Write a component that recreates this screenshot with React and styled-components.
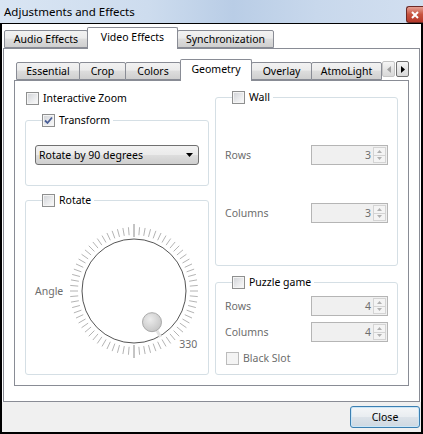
import styled, { createGlobalStyle } from "styled-components";

const GlobalStyle = createGlobalStyle`
  html, body {
    margin: 0;
    padding: 0;
    background: #000;
  }
  body {
    font-family: "Noto Sans", "DejaVu Sans", sans-serif;
    font-size: 10.5px;
    color: #000;
  }
`;

const Window = styled.div`
  width: 423px;
  height: 434px;
  display: flex;
  flex-direction: column;
  overflow: hidden;
`;

const TitleBar = styled.div`
  height: 23px;
  flex: none;
  display: flex;
  align-items: center;
  justify-content: space-between;
  padding-left: 4px;
  background: linear-gradient(90deg, #d9e5f3 0%, #cddcee 35%, #b9cde6 55%, #c8d8ec 75%, #d2dff0 100%);
  font-size: 11.5px;
  color: #000;
`;

const CloseX = styled.div`
  align-self: flex-start;
  margin-top: 6px;
  width: 16px;
  height: 15px;
  border: 1px solid #6d2a26;
  border-right: none;
  border-radius: 3px 0 0 3px;
  background: linear-gradient(#e6a094, #c7533f 50%, #b5382a);
  display: flex;
  align-items: center;
  justify-content: center;
`;

const Body = styled.div`
  flex: 1;
  display: flex;
  flex-direction: column;
  border: 2px solid #000;
  border-top: 1px solid #000;
  background: #fff;
`;

const TabBar = styled.div`
  display: flex;
  align-items: flex-end;
  padding-left: ${(p) => p.$indent}px;
  height: ${(p) => p.$height}px;
  flex: none;
  position: relative;
  z-index: 1;
`;

const Tab = styled.div`
  box-sizing: border-box;
  width: ${(p) => p.$w}px;
  height: ${(p) => (p.$active ? p.$h + 4 : p.$h)}px;
  margin-bottom: ${(p) => (p.$active ? -1 : 0)}px;
  margin-left: -1px;
  border: 1px solid #898c95;
  border-bottom: ${(p) => (p.$active ? "none" : "1px solid #898c95")};
  border-radius: 2px 2px 0 0;
  background: ${(p) =>
    p.$active
      ? "#fff"
      : "linear-gradient(#f2f2f2 0%, #ebebeb 45%, #dddddd 50%, #cfcfcf 100%)"};
  display: flex;
  align-items: center;
  justify-content: center;
  padding-bottom: ${(p) => (p.$active ? 3 : 0)}px;
  white-space: nowrap;
`;

const Page = styled.div`
  box-sizing: border-box;
  border: 1px solid #898c95;
  background: #fff;
`;

const OuterPage = styled(Page)`
  margin: 0 1px;
  height: 354px;
  padding: 10px 10px 0 10px;
`;

const InnerPage = styled(Page)`
  height: 306px;
  display: grid;
  grid-template-columns: 184px 183px;
  column-gap: 6px;
  padding: 0 0 0 10px;
`;

const ScrollButtons = styled.div`
  margin-left: auto;
  align-self: flex-start;
  margin-top: 2px;
  display: flex;
  gap: 1px;
`;

const ScrollButton = styled.div`
  box-sizing: border-box;
  width: 13px;
  height: 16px;
  border: 1px solid ${(p) => (p.$disabled ? "#c5c5c5" : "#707070")};
  border-radius: 2px;
  background: linear-gradient(#f6f6f6, #e5e5e5 50%, #d9d9d9);
  display: flex;
  align-items: center;
  justify-content: center;
`;

const Column = styled.div`
  display: flex;
  flex-direction: column;
`;

const CheckRow = styled.label`
  display: flex;
  align-items: center;
  gap: 4px;
  height: 14px;
  color: ${(p) => (p.$disabled ? "#6d6d6d" : "#000")};
  margin: ${(p) => p.$margin || "0"};
`;

const Box = styled.span`
  box-sizing: border-box;
  width: 13px;
  height: 13px;
  flex: none;
  border: 1px solid ${(p) => (p.$disabled ? "#bcbcbc" : "#8e8f8f")};
  background: ${(p) =>
    p.$disabled
      ? "#f4f4f4"
      : "linear-gradient(135deg, #cfd1d5 0%, #e9eaec 55%, #fbfbfb 100%)"};
  box-shadow: inset 0 0 0 1px #f4f4f4;
  display: flex;
  align-items: center;
  justify-content: center;
`;

const Group = styled.fieldset`
  box-sizing: border-box;
  margin: ${(p) => p.$top}px 0 0 0;
  border: 1px solid #d5dfe5;
  border-radius: 3px;
  padding: ${(p) => p.$pad};
  height: ${(p) => p.$h}px;
  min-width: 0;
`;

const Legend = styled.legend`
  padding: 0 3px 0 0;
  margin-left: 7px;
  line-height: 12px;
`;

const Combo = styled.div`
  box-sizing: border-box;
  height: 20px;
  border: 1px solid #707070;
  border-radius: 3px;
  background: linear-gradient(#f2f2f2 0%, #ebebeb 48%, #dddddd 52%, #cfcfcf 100%);
  display: flex;
  align-items: center;
  justify-content: space-between;
  padding: 0 5px 0 3px;
`;

const FieldRow = styled.div`
  display: flex;
  align-items: center;
  justify-content: space-between;
  height: 20px;
  color: #6d6d6d;
  margin-top: ${(p) => p.$top}px;
`;

const Spin = styled.div`
  box-sizing: border-box;
  width: 77px;
  height: 20px;
  border: 1px solid #b5b5b5;
  background: #f0f0f0;
  display: flex;
  align-items: center;
  justify-content: flex-end;
  color: #6d6d6d;
`;

const SpinArrows = styled.div`
  width: 13px;
  height: 16px;
  margin: 0 1px 0 2px;
  display: flex;
  flex-direction: column;
  border: 1px solid #d4d4d4;
  box-sizing: border-box;
  background: #f4f4f4;
  & > span {
    flex: 1;
    display: flex;
    align-items: center;
    justify-content: center;
  }
  & > span + span {
    border-top: 1px solid #d4d4d4;
  }
`;

const DialRow = styled.div`
  display: flex;
  align-items: center;
  gap: 1px;
  margin-top: 14px;
  color: #6d6d6d;
`;

const DialWrap = styled.div`
  position: relative;
  width: 140px;
  height: 140px;
`;

const DialValue = styled.span`
  position: absolute;
  left: 115px;
  top: 116px;
  color: #6d6d6d;
`;

const Footer = styled.div`
  flex: 1;
  background: #f0f0f0;
  display: flex;
  justify-content: flex-end;
  align-items: flex-start;
  padding: 4px 1px 0 0;
`;

const Button = styled.button`
  box-sizing: border-box;
  width: 70px;
  height: 22px;
  border: 1px solid #3c7fb1;
  border-radius: 3px;
  background: linear-gradient(#f4f6f8 0%, #e9edf1 48%, #dbe2e9 52%, #cfd8e1 100%);
  box-shadow: inset 0 0 0 1px #c9e6f8;
  font: inherit;
  color: #000;
  padding: 0;
`;

function Check({ checked }) {
  if (!checked) return null;
  return (
    <svg width="9" height="9" viewBox="0 0 9 9">
      <path d="M1 4.5 L3.5 7 L8 1.5" fill="none" stroke="#4a5f97" strokeWidth="1.8" />
    </svg>
  );
}

function CheckBox({ label, checked, disabled, margin }) {
  return (
    <CheckRow $disabled={disabled} $margin={margin}>
      <Box $disabled={disabled}>
        <Check checked={checked} />
      </Box>
      {label}
    </CheckRow>
  );
}

function Triangle({ dir, color }) {
  const d = {
    down: "M0 0 H7 L3.5 4 Z",
    left: "M4 0 V7 L0 3.5 Z",
    right: "M0 0 V7 L4 3.5 Z",
    up: "M0 3 H5 L2.5 0 Z",
    dn: "M0 0 H5 L2.5 3 Z",
  }[dir];
  const size = {
    down: [7, 4],
    left: [4, 7],
    right: [4, 7],
    up: [5, 3],
    dn: [5, 3],
  }[dir];
  return (
    <svg width={size[0]} height={size[1]} viewBox={`0 0 ${size[0]} ${size[1]}`}>
      <path d={d} fill={color} />
    </svg>
  );
}

function SpinBox({ value }) {
  return (
    <Spin>
      {value}
      <SpinArrows>
        <span>
          <Triangle dir="up" color="#b0b0b0" />
        </span>
        <span>
          <Triangle dir="dn" color="#b0b0b0" />
        </span>
      </SpinArrows>
    </Spin>
  );
}

function Dial({ value }) {
  const cx = 70;
  const cy = 70;
  const ticks = [];
  for (let i = 0; i < 72; i++) {
    const a = (i * 5 * Math.PI) / 180;
    const big = i % 36 === 0;
    const r1 = big ? 54 : 56;
    const r2 = big ? 67 : 64;
    ticks.push(
      <line
        key={i}
        x1={cx + r1 * Math.sin(a)}
        y1={cy - r1 * Math.cos(a)}
        x2={cx + r2 * Math.sin(a)}
        y2={cy - r2 * Math.cos(a)}
        stroke={big ? "#8a8a8a" : "#b4b4b4"}
        strokeWidth="1"
      />
    );
  }
  // 0 sits at the bottom, values run clockwise
  const ang = ((value + 180) % 360) * (Math.PI / 180);
  const hx = cx + 36 * Math.sin(ang);
  const hy = cy - 36 * Math.cos(ang);
  return (
    <DialWrap>
      <svg width="140" height="140" viewBox="0 0 140 140">
        <defs>
          <radialGradient id="knob" cx="40%" cy="35%" r="70%">
            <stop offset="0%" stopColor="#ececec" />
            <stop offset="100%" stopColor="#c4c4c4" />
          </radialGradient>
        </defs>
        {ticks}
        <circle cx={cx} cy={cy} r="52" fill="#fff" stroke="#555" strokeWidth="1" />
        <line
          x1={cx + 46 * Math.sin(ang)}
          y1={cy - 46 * Math.cos(ang)}
          x2={cx + 53 * Math.sin(ang)}
          y2={cy - 53 * Math.cos(ang)}
          stroke="#e2e2e2"
          strokeWidth="3"
        />
        <circle cx={hx} cy={hy} r="9.5" fill="url(#knob)" stroke="#a9a9a9" strokeWidth="1" />
      </svg>
      <DialValue>{value}</DialValue>
    </DialWrap>
  );
}

export default function App() {
  return (
    <>
      <GlobalStyle />
      <Window>
        <TitleBar>
          <span>Adjustments and Effects</span>
          <CloseX>
            <svg width="8" height="8" viewBox="0 0 8 8">
              <path d="M1 1 L7 7 M7 1 L1 7" stroke="#fff" strokeWidth="2" />
            </svg>
          </CloseX>
        </TitleBar>
        <Body>
          <TabBar $indent={3} $height={24}>
            <Tab $w={84} $h={18}>Audio Effects</Tab>
            <Tab $w={91} $h={18} $active>Video Effects</Tab>
            <Tab $w={97} $h={18}>Synchronization</Tab>
          </TabBar>
          <OuterPage>
            <TabBar $indent={3} $height={21}>
              <Tab $w={64} $h={18}>Essential</Tab>
              <Tab $w={47} $h={18}>Crop</Tab>
              <Tab $w={56} $h={18}>Colors</Tab>
              <Tab $w={72} $h={18} $active>Geometry</Tab>
              <Tab $w={61} $h={18}>Overlay</Tab>
              <Tab $w={71} $h={18}>AtmoLight</Tab>
              <ScrollButtons>
                <ScrollButton $disabled>
                  <Triangle dir="left" color="#a0a0a0" />
                </ScrollButton>
                <ScrollButton>
                  <Triangle dir="right" color="#000" />
                </ScrollButton>
              </ScrollButtons>
            </TabBar>
            <InnerPage>
              <Column>
                <CheckBox label="Interactive Zoom" margin="10px 0 0 1px" />
                <Group $h={73} $top={8} $pad="18px 9px 0 9px">
                  <Legend>
                    <CheckBox label="Transform" checked />
                  </Legend>
                  <Combo>
                    <span>Rotate by 90 degrees</span>
                    <Triangle dir="down" color="#000" />
                  </Combo>
                </Group>
                <Group $h={182} $top={7} $pad="0 0 0 9px">
                  <Legend>
                    <CheckBox label="Rotate" />
                  </Legend>
                  <DialRow>
                    <span>Angle</span>
                    <Dial value={330} />
                  </DialRow>
                </Group>
              </Column>
              <Column>
                <Group $h={176} $top={9} $pad="0 9px 0 9px">
                  <Legend>
                    <CheckBox label="Wall" />
                  </Legend>
                  <FieldRow $top={41}>
                    <span>Rows</span>
                    <SpinBox value={3} />
                  </FieldRow>
                  <FieldRow $top={38}>
                    <span>Columns</span>
                    <SpinBox value={3} />
                  </FieldRow>
                </Group>
                <Group $h={100} $top={9} $pad="0 9px 0 9px">
                  <Legend>
                    <CheckBox label="Puzzle game" />
                  </Legend>
                  <FieldRow $top={7}>
                    <span>Rows</span>
                    <SpinBox value={4} />
                  </FieldRow>
                  <FieldRow $top={6}>
                    <span>Columns</span>
                    <SpinBox value={4} />
                  </FieldRow>
                  <CheckBox label="Black Slot" disabled margin="9px 0 0 1px" />
                </Group>
              </Column>
            </InnerPage>
          </OuterPage>
          <Footer>
            <Button>Close</Button>
          </Footer>
        </Body>
      </Window>
    </>
  );
}
